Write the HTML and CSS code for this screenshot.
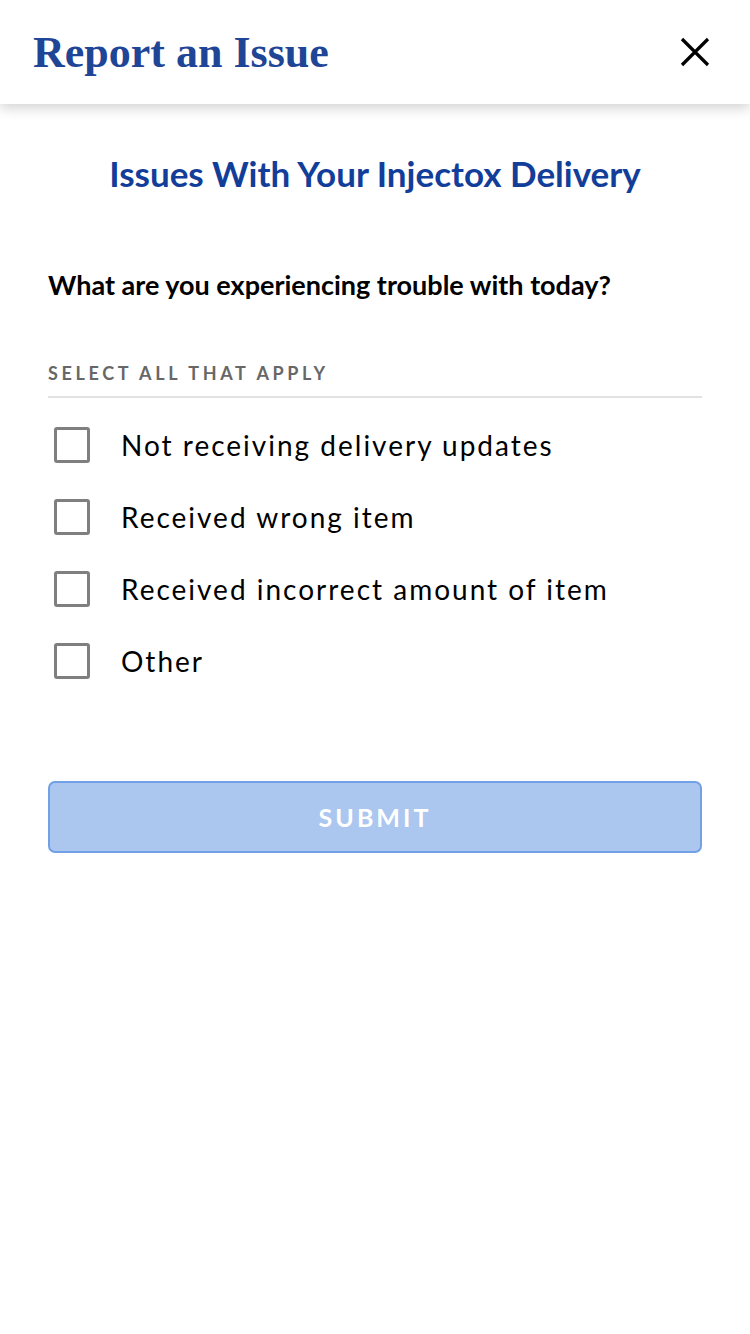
FILE: index.html
```html
<!DOCTYPE html>
<html lang="en">
<head>
<meta charset="utf-8">
<title>Report an Issue</title>
<link rel="stylesheet" href="styles.css">
</head>
<body>
<header class="topbar">
  <h1 class="topbar-title">Report an Issue</h1>
  <button class="close" aria-label="Close">
    <svg width="30" height="30" viewBox="0 0 30 30"><path d="M2 2 L28 28 M28 2 L2 28" stroke="#000" stroke-width="3.2" fill="none"/></svg>
  </button>
</header>
<main class="content">
  <h2 class="title">Issues With Your Injectox Delivery</h2>
  <p class="question">What are you experiencing trouble with today?</p>
  <div class="select-label">SELECT ALL THAT APPLY</div>
  <ul class="options">
    <li class="option"><span class="box"></span><span class="opt-text">Not receiving delivery updates</span></li>
    <li class="option"><span class="box"></span><span class="opt-text">Received wrong item</span></li>
    <li class="option"><span class="box"></span><span class="opt-text">Received incorrect amount of item</span></li>
    <li class="option"><span class="box"></span><span class="opt-text">Other</span></li>
  </ul>
  <button class="submit">SUBMIT</button>
</main>
</body>
</html>
```
FILE: styles.css
```css
* { box-sizing: border-box; }
html, body { margin: 0; padding: 0; background: #fff; }
body { width: 750px; min-height: 1334px; font-family: Lato, "Liberation Sans", sans-serif; color: #000; }

.topbar {
  height: 104px;
  display: flex;
  align-items: center;
  justify-content: space-between;
  padding: 0 40px 0 33px;
  background: #fff;
  box-shadow: 0 4px 12px rgba(0,0,0,0.18);
  position: relative;
}
.topbar-title {
  margin: 0;
  font-family: "Liberation Serif", "Times New Roman", serif;
  font-weight: 700;
  font-size: 44px;
  letter-spacing: 0;
  color: #1f4597;
}
.close {
  border: 0;
  background: none;
  padding: 0;
  width: 30px;
  height: 30px;
  display: flex;
}

.content { padding: 0 48px; }
.title {
  margin: 49px 0 0;
  text-align: center;
  font-size: 35px;
  font-weight: 700;
  color: #123e9a;
  line-height: 40px;
}
.question {
  margin: 77px 0 0;
  font-size: 27px;
  font-weight: 700;
  line-height: 30px;
}
.select-label {
  margin-top: 61px;
  font-size: 18px;
  font-weight: 700;
  letter-spacing: 3.65px;
  color: #676767;
  line-height: 24px;
  padding-bottom: 11px;
  border-bottom: 2px solid #e2e2e2;
}
.options { list-style: none; margin: 11px 0 0; padding: 0; }
.option {
  display: flex;
  align-items: center;
  height: 72px;
}
.box {
  width: 36px;
  height: 36px;
  margin-left: 6px;
  border: 3px solid #7f7f7f;
  border-radius: 3px;
  flex: none;
}
.opt-text {
  margin-left: 31px;
  font-size: 28px;
  letter-spacing: 2px;
  line-height: 36px;
}
.submit {
  margin-top: 84px;
  width: 654px;
  height: 72px;
  background: #abc6ef;
  border: 2px solid #71a0e4;
  border-radius: 7px;
  color: #fff;
  font-family: Lato, "Liberation Sans", sans-serif;
  font-size: 25px;
  font-weight: 700;
  letter-spacing: 3px;
}
```
